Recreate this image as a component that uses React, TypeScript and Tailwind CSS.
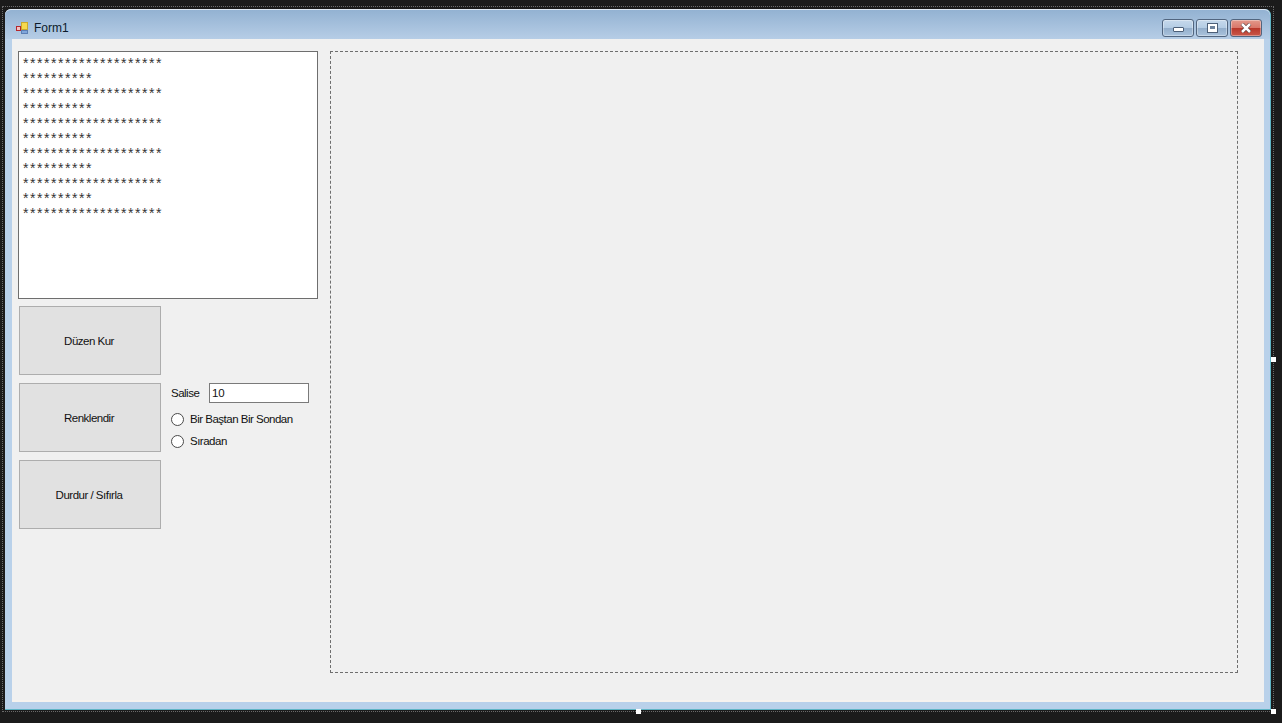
const stars = Array.from({ length: 11 }, (_, i) => "*".repeat(i % 2 === 0 ? 20 : 10));

function FormIcon() {
	return (
		<svg width="14" height="14" viewBox="0 0 14 14" className="shrink-0">
			<rect x="1.5" y="5.5" width="4" height="4" fill="#f3c0c0" stroke="#b5272d" />
			<rect x="6.5" y="9.5" width="6" height="3" fill="#7fa6dc" stroke="#5b7fb5" />
			<rect x="6.5" y="1.5" width="6" height="7" fill="#f6d94e" stroke="#c9a92f" />
		</svg>
	);
}

function CaptionButton({ children, close }: { children: React.ReactNode; close?: boolean }) {
	return (
		<div
			className={`flex h-[18px] w-[32px] items-center justify-center rounded-[3px] border border-[#51657f] shadow-[inset_0_0_0_1px_rgba(255,255,255,0.35)] ${
				close
					? "bg-[linear-gradient(#e39a8c_0%,#d9776a_48%,#b8382b_52%,#c9584a_100%)]"
					: "bg-[linear-gradient(#c6d9ec_0%,#b4cce4_48%,#93aecb_52%,#aac3dd_100%)]"
			}`}
		>
			{children}
		</div>
	);
}

function ActionButton({ label }: { label: string }) {
	return (
		<div className="flex h-[69px] w-[142px] items-center justify-center border border-[#adadad] bg-[#e1e1e1] pr-[2px] pt-[2px] text-[#111]">
			{label}
		</div>
	);
}

function Radio({ label }: { label: string }) {
	return (
		<div className="flex h-[14px] items-center gap-[6px]">
			<div className="h-[13px] w-[13px] rounded-full border border-[#4a4a4a] bg-white" />
			<span className="pt-px">{label}</span>
		</div>
	);
}

function Handle({ className }: { className: string }) {
	return <div className={`absolute h-[5px] w-[5px] bg-white ${className}`} />;
}

export default function App() {
	return (
		<div className="relative h-[723px] w-[1282px] overflow-hidden bg-[#1b1b1b] pl-[5px] pt-[9px] font-['Liberation_Sans',sans-serif] text-[11.5px] tracking-[-0.5px] text-[#111]">
			{/* designer selection frame */}
			<div className="pointer-events-none absolute left-[2px] top-[6px] h-[706px] w-[1272px] border border-dotted border-[#6a6a6a]" />

			<div className="flex h-[701px] w-[1266px] flex-col rounded-t-[6px] border-b border-r border-[#5fb4c4] bg-[#b9d1ea]">
				<div className="flex h-[30px] items-center rounded-t-[6px] border-t border-[#dfe8f2] bg-[linear-gradient(#93b2d2,#b6cde6)] pl-[10px] pr-[8px] pt-[6px]">
					<FormIcon />
					<span className="ml-[5px] text-[12px] tracking-normal text-[#0c1a2a]">Form1</span>
					<div className="ml-auto flex gap-[2px]">
						<CaptionButton>
							<div className="mt-[3px] h-[5px] w-[11px] rounded-[1px] border border-[#4c5f78] bg-white" />
						</CaptionButton>
						<CaptionButton>
							<div className="flex h-[10px] w-[11px] items-center justify-center border border-[#4c5f78] bg-white">
								<div className="h-[3px] w-[5px] bg-[#6f839c]" />
							</div>
						</CaptionButton>
						<CaptionButton close>
							<svg width="12" height="10" viewBox="0 0 12 10">
								<path d="M2 1 L10 9 M10 1 L2 9" stroke="#4a2a28" strokeWidth="3.8" />
								<path d="M2 1 L10 9 M10 1 L2 9" stroke="#fff" strokeWidth="2.6" />
							</svg>
						</CaptionButton>
					</div>
				</div>

				<div className="mb-[7px] ml-[7px] mr-[6px] flex flex-1 gap-[12px] border-b-2 border-[#f6f3ef] bg-[#f0f0f0] pl-[6px] pt-[12px]">
					<div className="flex w-[300px] flex-col">
						<div className="h-[248px] border border-[#6e6e6e] bg-white pl-[4px] pt-[4px] text-[14px] leading-[15px] tracking-[1.55px] text-[#333]">
							{stars.map((line, i) => (
								<div key={i}>{line}</div>
							))}
						</div>

						<div className="ml-px mt-[7px] flex flex-col gap-[8px]">
							<ActionButton label="Düzen Kur" />
							<div className="flex">
								<ActionButton label="Renklendir" />
								<div className="ml-[10px] flex flex-col">
									<div className="flex h-[20px] items-center">
										<span className="w-[38px] pt-px">Salise</span>
										<div className="flex h-[20px] w-[100px] items-center border border-[#7a7a7a] bg-white pl-[2px] pt-px tracking-[-0.2px]">
											10
										</div>
									</div>
									<div className="mt-[9px] flex flex-col gap-[8px]">
										<Radio label="Bir Baştan Bir Sondan" />
										<Radio label="Sıradan" />
									</div>
								</div>
							</div>
							<ActionButton label="Durdur / Sıfırla" />
						</div>
					</div>

					<div className="h-[622px] w-[908px] border border-dashed border-[#6e6e6e]" />
				</div>
			</div>

			<Handle className="left-[636px] top-[709px]" />
			<Handle className="left-[1271px] top-[357px]" />
			<Handle className="left-[1271px] top-[709px]" />
		</div>
	);
}
